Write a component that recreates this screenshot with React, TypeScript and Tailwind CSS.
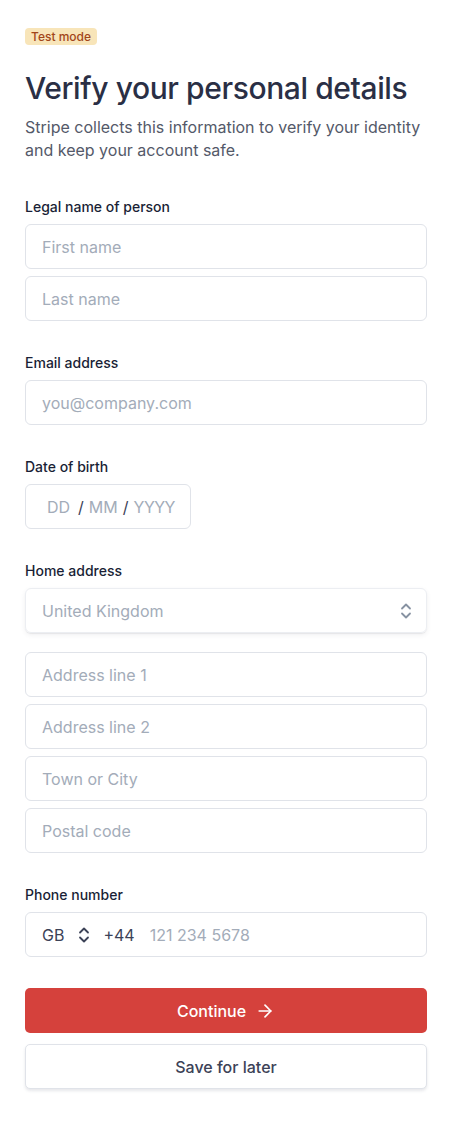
import { ArrowRight } from "lucide-react";

function Chevrons({ className }: { className?: string }) {
  return (
    <svg viewBox="0 0 12 18" className={className} fill="none" stroke="currentColor" strokeWidth="1.8" strokeLinecap="round" strokeLinejoin="round">
      <path d="M2 6.5 6 2.5l4 4" />
      <path d="M2 11.5 6 15.5l4-4" />
    </svg>
  );
}

function Label({ children }: { children: React.ReactNode }) {
  return <div className="text-[14px] leading-[20px] font-medium text-[#1a1f36] mb-[7px]">{children}</div>;
}

function Field({ placeholder }: { placeholder: string }) {
  return (
    <div className="h-[45px] w-full flex items-center px-4 border border-[#e0e3e9] rounded-[6px] bg-white text-[16px] text-[#a3acb9]">
      {placeholder}
    </div>
  );
}

export default function App() {
  return (
    <div className="w-[461px] min-h-[1144px] bg-white px-[25px] pt-[28px] pb-12" style={{ fontFamily: "Inter, 'Noto Sans', sans-serif" }}>
      <div className="w-[402px]">
        <div className="flex w-fit items-center h-[17px] px-[6px] rounded-[4px] bg-[#f8e5b9] text-[#a2461a] text-[12px] leading-[17px] font-medium">
          Test mode
        </div>

        <h1 className="mt-[25px] text-[30px] leading-[36px] font-medium text-[#2a2f45] tracking-[-0.4px]">
          Verify your personal details
        </h1>
        <p className="mt-[10px] text-[16px] leading-[23px] text-[#545969]">
          Stripe collects this information to verify your identity and keep your account safe.
        </p>

        <section className="mt-[35px]">
          <Label>Legal name of person</Label>
          <div className="flex flex-col gap-[7px]">
            <Field placeholder="First name" />
            <Field placeholder="Last name" />
          </div>
        </section>

        <section className="mt-[32px]">
          <Label>Email address</Label>
          <Field placeholder="you@company.com" />
        </section>

        <section className="mt-[32px]">
          <Label>Date of birth</Label>
          <div className="h-[45px] w-[166px] flex items-center pl-[21px] border border-[#e0e3e9] rounded-[6px] text-[16px] text-[#a3acb9]">
            <span>DD</span>
            <span className="ml-[8px] text-[#3c4257]">/</span>
            <span className="ml-[5px]">MM</span>
            <span className="ml-[5px] text-[#3c4257]">/</span>
            <span className="ml-[5px] tracking-[-0.5px]">YYYY</span>
          </div>
        </section>

        <section className="mt-[32px]">
          <Label>Home address</Label>
          <div className="h-[45px] w-full flex items-center justify-between pl-4 pr-[14px] border border-[#eceef2] rounded-[6px] shadow-[0_2px_5px_rgba(60,66,87,0.08),0_1px_1px_rgba(0,0,0,0.06)] text-[16px] text-[#a3acb9]">
            <span>United Kingdom</span>
            <Chevrons className="w-[12px] h-[18px] text-[#8792a2]" />
          </div>
          <div className="mt-[19px] flex flex-col gap-[7px]">
            <Field placeholder="Address line 1" />
            <Field placeholder="Address line 2" />
            <Field placeholder="Town or City" />
            <Field placeholder="Postal code" />
          </div>
        </section>

        <section className="mt-[32px]">
          <Label>Phone number</Label>
          <div className="h-[45px] w-full flex items-center pl-4 border border-[#e0e3e9] rounded-[6px] text-[16px]">
            <span className="text-[#3c4257]">GB</span>
            <Chevrons className="ml-[14px] w-[12px] h-[18px] text-[#3c4257]" />
            <span className="ml-[13px] text-[#3c4257]">+44</span>
            <span className="ml-[15px] text-[#a3acb9]">121 234 5678</span>
          </div>
        </section>

        <button className="mt-[31px] h-[45px] w-full flex items-center justify-center gap-[9px] rounded-[5px] bg-[#d5413c] text-white text-[16px] font-medium">
          Continue
          <ArrowRight className="w-[20px] h-[20px]" strokeWidth={2} />
        </button>
        <button className="mt-[11px] h-[45px] w-full flex items-center justify-center rounded-[5px] bg-white border border-[#e0e3e9] shadow-[0_2px_3px_rgba(60,66,87,0.12)] text-[#3c4257] text-[16px] font-medium">
          Save for later
        </button>
      </div>
    </div>
  );
}
